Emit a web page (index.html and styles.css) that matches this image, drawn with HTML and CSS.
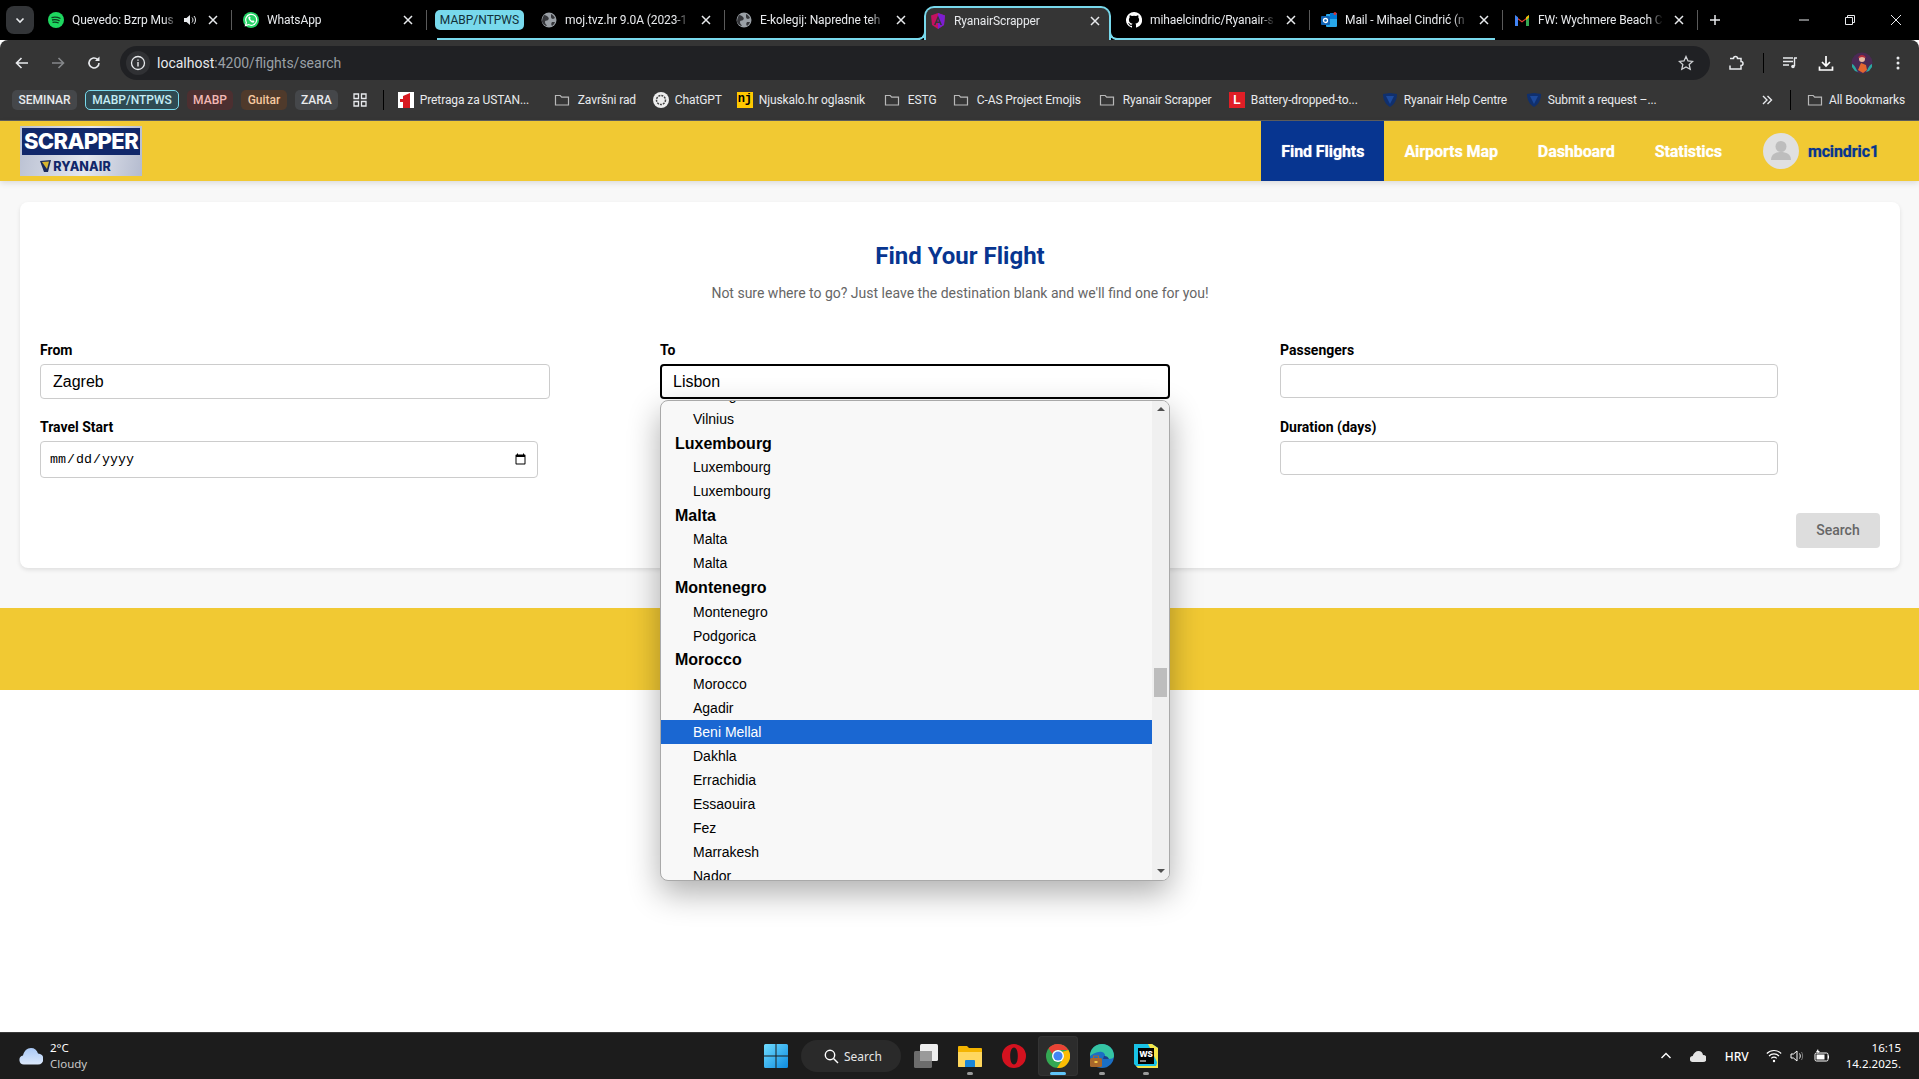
FILE: index.html
```html
<!DOCTYPE html>
<html>
<head>
  <title>RyanairScrapper</title>
  <link rel="stylesheet" href="styles.css">
</head>
<body>
<svg class="sprite" width="0" height="0">
  <symbol id="close" viewBox="0 0 12 12"><path d="M2 2l8 8M10 2l-8 8" stroke="#e8eaed" stroke-width="1.5" fill="none"/></symbol>
  <symbol id="globe" viewBox="0 0 16 16"><circle cx="8" cy="8" r="7.5" fill="#9aa0a6"/><path d="M3 3c2 0 3 1 4 2s1 2 0 3-3 0-3 2 1 2 2 4c-2 0-4-2-5-4 0-3 1-5 2-7zM10 2c2 1 3 2 4 4l-2 1c-1 0-2-1-2-2zM11 10h3c-.5 2-2 3-3 4-1-1-1-3 0-4z" fill="#35363a"/></symbol>
  <symbol id="folder" viewBox="0 0 16 16"><path d="M1.5 3.5h4.7l1.5 1.6h6.8v7.9h-13z" fill="none" stroke="#b8b8b8" stroke-width="1.2"/></symbol>
  <symbol id="shield" viewBox="0 0 16 16"><path d="M1 2l7-1 7 1c0 5-2 10-7 13C3 12 1 7 1 2z" fill="#10306e"/><path d="M4 4l4 8 4-8z" fill="#1d4a9c"/></symbol>
</svg>

<div class="tab-strip">
  <button class="tab-search"><svg width="12" height="12" viewBox="0 0 12 12"><path d="M2.5 4.5L6 8l3.5-3.5" stroke="#e8eaed" stroke-width="1.6" fill="none"/></svg></button>

  <div class="tab">
    <svg class="fav" viewBox="0 0 16 16"><circle cx="8" cy="8" r="8" fill="#1ed760"/><path d="M3.5 5.6c3-.8 6-.6 9 .9M4 8c2.600-.6 5-.4 7.600.8M4.500 10.300c2.200-.5 4.200-.3 6.200.7" stroke="#0c3b1e" stroke-width="1.300" fill="none"/></svg>
    <span class="tab-title">Quevedo: Bzrp Mus</span>
    <svg class="tab-sound" viewBox="0 0 14 14"><path d="M1 5h2.500L7 2v10L3.500 9H1z" fill="#e8eaed"/><path d="M9 4.500c1.300 1.500 1.300 3.500 0 5M11 3c2 2.300 2 5.700 0 8" stroke="#e8eaed" fill="none"/></svg>
    <svg class="tab-close"><use href="#close"/></svg>
  </div>
  <div class="tab">
    <svg class="fav" viewBox="0 0 16 16"><circle cx="8" cy="8" r="8" fill="#25d366"/><path d="M2.500 13.500l.9-3a5.500 5.500 0 1 1 2.100 2.100z" fill="#25d366" stroke="#fff" stroke-width="1.200"/><path d="M5.700 4.800c-1 1.300.2 3.100 1.300 4.200s2.900 2.300 4.100 1.300l.3-1.300-1.600-.8-.7.700c-.9-.4-1.700-1.200-2.100-2.100l.7-.7-.8-1.600z" fill="#fff"/></svg>
    <span class="tab-title">WhatsApp</span>
    <svg class="tab-close"><use href="#close"/></svg>
  </div>

  <div class="group-chip">MABP/NTPWS</div>
  <div class="tab in-group">
    <svg class="fav"><use href="#globe"/></svg>
    <span class="tab-title">moj.tvz.hr 9.0A (2023-1</span>
    <svg class="tab-close"><use href="#close"/></svg>
  </div>
  <div class="tab in-group before-active">
    <svg class="fav"><use href="#globe"/></svg>
    <span class="tab-title">E-kolegij: Napredne teh</span>
    <svg class="tab-close"><use href="#close"/></svg>
  </div>
  <div class="tab tab-active">
    <svg class="fav" viewBox="0 0 16 16"><path d="M8 0L1 2.500l1 9.500 6 4 6-4 1-9.500z" fill="#c3115f"/><path d="M8 0l7 2.500-1 9.500-6 4z" fill="#7a1fd1"/><path d="M8 2.500L4 12h1.600l.8-2h3.200l.8 2H12zM7 8.500l1-2.600 1 2.600z" fill="#35363a"/></svg>
    <span class="tab-title">RyanairScrapper</span>
    <svg class="tab-close"><use href="#close"/></svg>
  </div>
  <div class="tab in-group">
    <svg class="fav" viewBox="0 0 16 16"><path d="M8 0a8 8 0 0 0-2.500 15.600c.4.100.5-.2.500-.4v-1.400c-2.200.5-2.700-1-2.700-1-.4-.9-.9-1.200-.9-1.200-.7-.5.100-.5.100-.5.800.1 1.200.8 1.200.8.700 1.200 1.900.9 2.300.7.100-.5.300-.9.500-1.100-1.800-.2-3.600-.9-3.600-4 0-.9.300-1.600.8-2.100-.1-.2-.4-1 .1-2.100 0 0 .7-.2 2.200.8a7.600 7.600 0 0 1 4 0c1.500-1 2.200-.8 2.200-.8.400 1.100.2 1.900.1 2.100.5.600.8 1.300.8 2.100 0 3.100-1.900 3.800-3.700 4 .3.300.6.800.6 1.500v2.200c0 .2.100.5.600.4A8 8 0 0 0 8 0z" fill="#fff"/></svg>
    <span class="tab-title">mihaelcindric/Ryanair-s</span>
    <svg class="tab-close"><use href="#close"/></svg>
  </div>
  <div class="tab in-group tab-group-end">
    <svg class="fav" viewBox="0 0 16 16"><rect x="5" y="2" width="11" height="13" rx="1" fill="#28a8ea"/><rect x="9" y="1" width="7" height="6" fill="#0078d4"/><rect y="4" width="9" height="9" rx="1" fill="#0f63b5"/><circle cx="4.500" cy="8.500" r="2" fill="none" stroke="#fff" stroke-width="1.300"/><circle cx="14" cy="1.500" r="1.500" fill="#d13438"/></svg>
    <span class="tab-title">Mail - Mihael Cindrić (n</span>
    <svg class="tab-close"><use href="#close"/></svg>
  </div>
  <div class="tab">
    <svg class="fav" viewBox="0 0 16 16"><path d="M1 14V4l7 5 7-5v10h-3V7.500L8 10.500 4 7.500V14z" fill="#ea4335"/><path d="M1 14V3l3 2.200V14z" fill="#4285f4"/><path d="M15 14V3l-3 2.200V14z" fill="#34a853"/><path d="M12 5.200L15 3v2.500L12 8z" fill="#fbbc04"/></svg>
    <span class="tab-title">FW: Wychmere Beach C</span>
    <svg class="tab-close"><use href="#close"/></svg>
  </div>
  <svg class="tab-new" viewBox="0 0 12 12"><path d="M6 1v10M1 6h10" stroke="#e8eaed" stroke-width="1.500"/></svg>

  <div class="window-controls">
    <span><svg width="12" height="12" viewBox="0 0 12 12"><path d="M1 6h10" stroke="#e8eaed"/></svg></span>
    <span><svg width="12" height="12" viewBox="0 0 12 12"><path d="M1.500 3.500h7v7h-7zM3.500 3.500v-2h7v7h-2" stroke="#e8eaed" fill="none"/></svg></span>
    <span><svg width="12" height="12" viewBox="0 0 12 12"><path d="M1 1l10 10M11 1L1 11" stroke="#e8eaed"/></svg></span>
  </div>
</div>

<div class="toolbar">
  <span class="tool-btn"><svg width="16" height="16" viewBox="0 0 16 16"><path d="M14 8H3M7.500 3L2.500 8l5 5" stroke="#e8eaed" stroke-width="1.600" fill="none"/></svg></span>
  <span class="tool-btn"><svg width="16" height="16" viewBox="0 0 16 16"><path d="M2 8h11M8.500 3l5 5-5 5" stroke="#85878a" stroke-width="1.600" fill="none"/></svg></span>
  <span class="tool-btn"><svg width="16" height="16" viewBox="0 0 16 16"><path d="M13 8a5 5 0 1 1-1.500-3.600" stroke="#e8eaed" stroke-width="1.600" fill="none"/><path d="M13.500 1.500V6H9z" fill="#e8eaed"/></svg></span>
  <div class="omnibox">
    <span class="site-info"><svg width="16" height="16" viewBox="0 0 16 16"><circle cx="8" cy="8" r="6.500" stroke="#e8eaed" stroke-width="1.300" fill="none"/><path d="M8 7v4.500M8 4.500v1.300" stroke="#e8eaed" stroke-width="1.400"/></svg></span>
    <span class="url"><b>localhost</b>:4200/flights/search</span>
    <svg class="star" width="16" height="16" viewBox="0 0 16 16"><path d="M8 1.500l2 4.400 4.700.5-3.500 3.200 1 4.700L8 11.900l-4.200 2.400 1-4.700L1.300 6.400 6 5.900z" fill="none" stroke="#d0d2d5" stroke-width="1.300"/></svg>
  </div>
  <span class="tool-btn tool-first"><svg width="18" height="18" viewBox="0 0 18 18"><path d="M3 4.500h3.500a2 2 0 0 1 4 0H14v3a2 2 0 0 1 0 4V15H3v-3.500" fill="none" stroke="#e8eaed" stroke-width="1.500"/></svg></span>
  <i class="tool-sep"></i>
  <span class="tool-btn"><svg width="18" height="18" viewBox="0 0 18 18"><path d="M2 4h10M2 7.500h10M2 11h6" stroke="#e8eaed" stroke-width="1.400"/><path d="M13 4h3M13.500 4v8" stroke="#e8eaed" stroke-width="1.400"/><circle cx="12" cy="12.500" r="1.800" fill="#e8eaed"/></svg></span>
  <span class="tool-btn"><svg width="18" height="18" viewBox="0 0 18 18"><path d="M9 2v10M5 8l4 4 4-4M2.500 12.500V16h13v-3.500" stroke="#fff" stroke-width="1.700" fill="none"/></svg></span>
  <span class="tool-btn"><svg width="22" height="22" viewBox="0 0 22 22"><circle cx="11" cy="11" r="10.500" fill="#4a2a55"/><path d="M1 12c3 1 4 5 6 8l-3-1-3-4zM21 12c-3 1-4 5-6 8l3-1 3-4z" fill="#2ba7a0"/><path d="M7 18l3-7 5 2 1 5-4 3z" fill="#e2662f"/><circle cx="11" cy="7" r="3" fill="#e9b9a0"/><path d="M7 6c1-4 7-4 8 0l-4-1z" fill="#b32a3a"/></svg></span>
  <span class="tool-btn"><svg width="16" height="16" viewBox="0 0 16 16"><circle cx="8" cy="3" r="1.500" fill="#e8eaed"/><circle cx="8" cy="8" r="1.500" fill="#e8eaed"/><circle cx="8" cy="13" r="1.500" fill="#e8eaed"/></svg></span>
</div>

<div class="bookmarks">
  <span class="bm-chip chip-grey chip-seminar">SEMINAR</span>
  <span class="bm-chip chip-cyan">MABP/NTPWS</span>
  <span class="bm-chip chip-red">MABP</span>
  <span class="bm-chip chip-orange">Guitar</span>
  <span class="bm-chip chip-grey">ZARA</span>
  <svg class="bm-apps" width="16" height="16" viewBox="0 0 16 16"><path d="M2 2h4.500v4.500H2zM9.500 2H14v4.500H9.500zM2 9.500h4.500V14H2zM9.500 9.500H14V14H9.500z" fill="none" stroke="#e8eaed" stroke-width="1.300"/></svg>
  <i class="bm-sep"></i>
  <a class="bm w-156"><svg class="fav" viewBox="0 0 16 16"><rect width="16" height="16" fill="#fff"/><path d="M5 4l7-3v15H5z" fill="#d71920"/><path d="M2 7h5v3H2z" fill="#d71920"/></svg>Pretraga za USTAN...</a>
  <a class="bm bm-folder w-99"><svg class="fav"><use href="#folder"/></svg>Završni rad</a>
  <a class="bm w-84"><svg class="fav" viewBox="0 0 16 16"><circle cx="8" cy="8" r="8" fill="#eee"/><circle cx="8" cy="8" r="4.500" fill="none" stroke="#444" stroke-width="1.500" stroke-dasharray="2 1"/></svg>ChatGPT</a>
  <a class="bm w-147"><span class="fav fav-nj">nj</span>Njuskalo.hr oglasnik</a>
  <a class="bm bm-folder w-69"><svg class="fav"><use href="#folder"/></svg>ESTG</a>
  <a class="bm bm-folder w-146"><svg class="fav"><use href="#folder"/></svg>C-AS Project Emojis</a>
  <a class="bm bm-folder w-130"><svg class="fav"><use href="#folder"/></svg>Ryanair Scrapper</a>
  <a class="bm w-153"><span class="fav fav-l">L</span>Battery-dropped-to...</a>
  <a class="bm w-144"><svg class="fav"><use href="#shield"/></svg>Ryanair Help Centre</a>
  <a class="bm"><svg class="fav"><use href="#shield"/></svg>Submit a request –...</a>
  <div class="bm-right">
    <svg width="12" height="12" viewBox="0 0 12 12"><path d="M2 2l4 4-4 4M6.500 2l4 4-4 4" stroke="#e8eaed" stroke-width="1.400" fill="none"/></svg>
    <i class="bm-sep"></i>
    <a class="bm"><svg class="fav"><use href="#folder"/></svg>All Bookmarks</a>
  </div>
</div>

<header class="app-header">
  <div class="logo">
    <div class="logo-band">SCRAPPER</div>
    <div class="logo-brand"><svg width="11" height="12" viewBox="0 0 11 12"><path d="M0 1l11-1-3 12H4z" fill="#1a2a5a"/><path d="M2 2l7-.5L7 9z" fill="#d8b62f"/></svg>RYANAIR</div>
  </div>
  <nav class="nav-links">
    <a class="active">Find Flights</a>
    <a>Airports Map</a>
    <a>Dashboard</a>
    <a>Statistics</a>
  </nav>
  <div class="user">
    <span class="avatar"><svg width="36" height="36" viewBox="0 0 36 36"><circle cx="18" cy="13.500" r="5.500" fill="#bdbdbd"/><path d="M8 27c0-6 5-8 10-8s10 2 10 8z" fill="#bdbdbd"/></svg></span>
    <span class="username">mcindric1</span>
  </div>
</header>

<main class="search-section">
  <section class="card">
    <h1>Find Your Flight</h1>
    <p class="subtitle">Not sure where to go? Just leave the destination blank and we'll find one for you!</p>
    <form class="form-grid">
      <div class="field">
        <label>From</label>
        <input class="input input-wide" type="text" value="Zagreb">
      </div>
      <div class="field">
        <label>To</label>
        <div class="combo">
          <input class="input input-wide input-focus" type="text" value="Lisbon">
          <div class="popup">
            <div class="popup-list">
              <div class="opt">Palanga</div>
              <div class="opt">Vilnius</div>
              <div class="optgroup">Luxembourg</div>
              <div class="opt">Luxembourg</div>
              <div class="opt">Luxembourg</div>
              <div class="optgroup">Malta</div>
              <div class="opt">Malta</div>
              <div class="opt">Malta</div>
              <div class="optgroup">Montenegro</div>
              <div class="opt">Montenegro</div>
              <div class="opt">Podgorica</div>
              <div class="optgroup">Morocco</div>
              <div class="opt">Morocco</div>
              <div class="opt">Agadir</div>
              <div class="opt selected">Beni Mellal</div>
              <div class="opt">Dakhla</div>
              <div class="opt">Errachidia</div>
              <div class="opt">Essaouira</div>
              <div class="opt">Fez</div>
              <div class="opt">Marrakesh</div>
              <div class="opt">Nador</div>
            </div>
            <div class="popup-scroll">
              <i class="arrow-up"></i>
              <i class="thumb"></i>
              <i class="arrow-down"></i>
            </div>
          </div>
        </div>
      </div>
      <div class="field">
        <label>Passengers</label>
        <input class="input input-narrow" type="text">
      </div>
      <div class="field">
        <label>Travel Start</label>
        <input class="input input-narrow input-date" type="date">
      </div>
      <div class="field">
        <label class="label-covered" aria-label="Travel End"></label>
        <input class="input input-narrow input-date" type="date">
      </div>
      <div class="field">
        <label>Duration (days)</label>
        <input class="input input-narrow" type="text">
      </div>
    </form>
    <div class="form-actions">
      <button class="search-btn" type="button">Search</button>
    </div>
  </section>
</main>

<footer class="app-footer"></footer>
<div class="page-fill"></div>

<div class="taskbar">
  <div class="weather">
    <svg width="24" height="18" viewBox="0 0 24 18"><defs><linearGradient id="cl" x1="0" y1="0" x2="0" y2="1"><stop offset="0" stop-color="#a9c8f5"/><stop offset="1" stop-color="#dbe8fb"/></linearGradient></defs><path d="M5 17.500a4.500 4.500 0 0 1-1-8.900C5 4 8 1 12 1c3.500 0 6 2 7 5.500a5.500 5.500 0 0 1 0 11z" fill="url(#cl)"/></svg>
    <div class="weather-text"><span>2°C</span><span class="weather-sub">Cloudy</span></div>
  </div>
  <div class="task-center">
    <span class="task-btn task-start"><svg width="24" height="24" viewBox="0 0 24 24"><defs><linearGradient id="win" x1="0" y1="0" x2="1" y2="1"><stop offset="0" stop-color="#6fdcff"/><stop offset="1" stop-color="#0d8be0"/></linearGradient></defs><path d="M0 1.500A1.500 1.500 0 0 1 1.500 0h10v11.500H0zM12.500 0h10A1.500 1.500 0 0 1 24 1.500v10H12.500zM0 12.500h11.500V24h-10A1.500 1.500 0 0 1 0 22.500zM12.500 12.500H24v10a1.500 1.500 0 0 1-1.500 1.500h-10z" fill="url(#win)"/></svg></span>
    <div class="task-search"><svg width="15" height="15" viewBox="0 0 15 15"><circle cx="6" cy="6" r="4.700" fill="none" stroke="#fff" stroke-width="1.400"/><path d="M9.500 9.500L14 14" stroke="#fff" stroke-width="1.400"/></svg>Search</div>
    <span class="task-btn"><svg width="24" height="24" viewBox="0 0 24 24"><rect x="0" y="7" width="18" height="17" rx="1.500" fill="#6c6c6c"/><rect x="6" y="0" width="18" height="17" rx="1.500" fill="#eee"/><path d="M6 7h12v10H6z" fill="#9a9a9a"/></svg></span>
    <span class="task-btn running"><svg width="24" height="24" viewBox="0 0 24 24"><path d="M0 3a1 1 0 0 1 1-1h8l2 2h12a1 1 0 0 1 1 1v17a1 1 0 0 1-1 1H1a1 1 0 0 1-1-1z" fill="#f4b400"/><path d="M0 8h24v14a1 1 0 0 1-1 1H1a1 1 0 0 1-1-1z" fill="#ffd75e"/><path d="M7 17a1 1 0 0 1 1-1h8a1 1 0 0 1 1 1v6H7z" fill="#1b86d8"/></svg></span>
    <span class="task-btn"><svg width="24" height="24" viewBox="0 0 24 24"><path d="M12 0a12 12 0 1 0 0 24 12 12 0 0 0 0-24zm0 3.500c2.500 0 3.800 3.800 3.800 8.500s-1.300 8.500-3.800 8.500S8.200 16.700 8.200 12 9.500 3.500 12 3.500z" fill="#d3121f" fill-rule="evenodd"/></svg></span>
    <span class="task-btn task-hover"><svg width="24" height="24" viewBox="0 0 24 24"><circle cx="12" cy="12" r="12" fill="#34a853"/><path d="M12 0a12 12 0 0 1 10.400 6H12a6 6 0 0 0-5.700 4.100L2.500 4.300A12 12 0 0 1 12 0z" fill="#ea4335"/><path d="M22.400 6A12 12 0 0 1 11 24l5.200-8A6 6 0 0 0 16 8z" fill="#fbbc04"/><circle cx="12" cy="12" r="6" fill="#fff"/><circle cx="12" cy="12" r="4.600" fill="#4285f4"/></svg></span>
    <span class="task-btn running"><svg width="24" height="24" viewBox="0 0 24 24"><circle cx="12" cy="12" r="12" fill="#1b6fc4"/><path d="M0 12C0 5 5 0 12 0s12 5 12 12c0 2-2 3-5 3H13c3-1 3-6-1-7-5-1-9 2-12 4z" fill="#35c4a2"/><path d="M14 12a5 5 0 0 1 5 3h-6z" fill="#1b3f8c"/><rect x="0" y="14" width="12" height="9" rx="1.500" fill="#a9672b"/><rect x="3.500" y="12" width="5" height="2.500" fill="none" stroke="#a9672b"/><rect x="4.500" y="17" width="3" height="2" fill="#f4c542"/></svg></span>
    <span class="task-btn running"><svg width="24" height="24" viewBox="0 0 24 24"><path d="M0 0h18l6 4v20H4L0 20z" fill="#19c2e6"/><path d="M14 0h4l6 4v16z" fill="#f4e44a"/><path d="M2 22h20l2-6v8H4z" fill="#f4e44a"/><rect x="4" y="4" width="16" height="16" fill="#000"/><text class="ws-text" x="12" y="12.500" text-anchor="middle">WS</text><path d="M6 17h6" stroke="#fff"/></svg></span>
  </div>
  <div class="tray">
    <svg class="tray-chev" width="12" height="12" viewBox="0 0 12 12"><path d="M1.500 8L6 3.500 10.500 8" stroke="#fff" stroke-width="1.400" fill="none"/></svg>
    <svg class="tray-cloud" width="16" height="11" viewBox="0 0 16 11"><path d="M3 11a3 3 0 0 1-.3-6C3.500 2 6 0 8.500 0c2.500 0 4 1.500 4.500 4a3.500 3.500 0 0 1 0 7z" fill="#e4e4e4"/></svg>
    <span class="tray-lang">HRV</span>
    <svg class="tray-wifi" width="16" height="14" viewBox="0 0 16 14"><path d="M.8 4.500a10.200 10.200 0 0 1 14.400 0M3 7a7 7 0 0 1 10 0M5.300 9.300a3.800 3.800 0 0 1 5.400 0" stroke="#fff" fill="none" stroke-width="1.100"/><circle cx="8" cy="12" r="1.200" fill="#fff"/></svg>
    <svg class="tray-sound" width="16" height="14" viewBox="0 0 16 14"><path d="M1 5h2.500L7 2v10L3.500 9H1z" fill="none" stroke="#fff"/><path d="M9.500 4.500c1 1.500 1 3.500 0 5" stroke="#fff" fill="none"/><path d="M11.500 3c1.500 2.300 1.500 5.700 0 8" stroke="#777" fill="none"/></svg>
    <svg class="tray-batt" width="16" height="14" viewBox="0 0 16 14"><rect x="1" y="4" width="13" height="8" rx="1.500" fill="none" stroke="#fff"/><rect x="2.500" y="5.500" width="8" height="5" fill="#fff"/><path d="M14.500 6.500v3" stroke="#fff"/><path d="M4 0L2 3h2L3 5l3-3H4.500z" fill="#fff"/></svg>
    <div class="clock"><span>16:15</span><span>14.2.2025.</span></div>
  </div>
</div>
</body>
</html>
```

FILE: styles.css
```css
* {
  box-sizing: border-box;
}

html, body {
  margin: 0;
  height: 100%;
}

body {
  display: flex;
  flex-direction: column;
  min-height: 1079px;
  background-color: #ffffff;
  font-family: Roboto, "Liberation Sans", sans-serif;
  overflow: hidden;
}

.sprite {
  position: absolute;
}

/* browser tabs */
.tab-strip {
  display: flex;
  align-items: stretch;
  height: 40px;
  background-color: #000000;
  color: #e8eaed;
  font-size: 12px;
  flex: none;
}

.tab-search {
  width: 28px;
  height: 28px;
  margin: 6px 3px 0 6px;
  padding: 0;
  border: none;
  border-radius: 8px;
  background-color: #333538;
  display: flex;
  align-items: center;
  justify-content: center;
}

.tab {
  position: relative;
  display: flex;
  align-items: center;
  width: 195px;
  padding-left: 11px;
}

.tab:not(.tab-active):not(.before-active)::after {
  content: "";
  position: absolute;
  right: 0;
  top: 10px;
  height: 20px;
  width: 1px;
  background-color: #5a5a5a;
}

.fav {
  width: 16px;
  height: 16px;
  flex: none;
}

.tab-title {
  flex: 1;
  min-width: 0;
  margin-left: 8px;
  letter-spacing: -0.1px;
  white-space: nowrap;
  overflow: hidden;
  -webkit-mask-image: linear-gradient(to right, #000 88%, transparent);
  mask-image: linear-gradient(to right, #000 88%, transparent);
}

.tab-sound {
  width: 14px;
  height: 14px;
  margin-left: 6px;
  flex: none;
}

.tab-close {
  width: 12px;
  height: 12px;
  margin: 0 13px 0 10px;
  flex: none;
}

.group-chip {
  align-self: flex-start;
  margin: 10px 6px 0 8px;
  width: 89px;
  height: 20px;
  line-height: 20px;
  text-align: center;
  border-radius: 5px;
  background-color: #78d9ec;
  color: #123038;
  font-size: 12px;
  position: relative;
}

.group-chip::after {
  content: "";
  position: absolute;
  left: 2px;
  right: -6px;
  top: 28px;
  height: 2px;
  background-color: #78d9ec;
}

.in-group {
  box-shadow: inset 0 -2px 0 #78d9ec;
}

.tab-group-end {
  width: 193px;
  box-shadow: none;
  background: linear-gradient(#78d9ec, #78d9ec) left bottom / 185px 2px no-repeat;
}

.tab-active {
  width: 187px;
  margin: 6px 4px 0;
  padding: 0 0 6px 4px;
  border: 2px solid #78d9ec;
  border-bottom: none;
  border-radius: 10px 10px 0 0;
  background-color: #353535;
}

.tab-active .tab-close {
  margin-right: 8px;
}

.tab-active::before,
.tab-active::after {
  content: "";
  position: absolute;
  bottom: 0;
  width: 9px;
  height: 9px;
  background-color: #000000;
  border-bottom: 2px solid #78d9ec;
}

.tab-active::before {
  left: -11px;
  border-right: 2px solid #78d9ec;
  border-bottom-right-radius: 8px;
}

.tab-active::after {
  right: -11px;
  border-left: 2px solid #78d9ec;
  border-bottom-left-radius: 8px;
}

.tab-new {
  width: 12px;
  height: 12px;
  align-self: center;
  margin-left: 11px;
}

.window-controls {
  display: flex;
  margin-left: auto;
}

.window-controls span {
  width: 46px;
  display: flex;
  align-items: center;
  justify-content: center;
}

/* address bar */
.toolbar {
  display: flex;
  align-items: center;
  height: 40px;
  padding: 6px 3px 0 4px;
  background-color: #353535;
  border-radius: 8px 8px 0 0;
  flex: none;
}

.tool-btn {
  width: 36px;
  height: 34px;
  display: flex;
  align-items: center;
  justify-content: center;
  flex: none;
}

.tool-first {
  margin-left: 8px;
}

.tool-sep {
  width: 1px;
  height: 20px;
  margin: 0 8px 0 9px;
  background-color: #000000;
  flex: none;
}

.omnibox {
  flex: 1;
  height: 34px;
  margin-left: 8px;
  display: flex;
  align-items: center;
  padding: 0 16px 0 6px;
  border-radius: 17px;
  background-color: #202124;
  font-size: 14px;
  color: #9aa0a6;
}

.site-info {
  width: 24px;
  height: 24px;
  display: flex;
  align-items: center;
  justify-content: center;
  border-radius: 50%;
  background-color: #303134;
}

.url {
  margin-left: 7px;
}

.url b {
  font-weight: 400;
  color: #e8eaed;
}

.star {
  margin-left: auto;
}

/* bookmarks */
.bookmarks {
  display: flex;
  align-items: center;
  height: 41px;
  padding: 0 14px 1px 12px;
  background-color: #363636;
  border-bottom: 1px solid #5f5f5f;
  color: #e8eaed;
  font-size: 12px;
  flex: none;
}

.bm-chip {
  height: 20px;
  line-height: 20px;
  margin-right: 8px;
  padding: 0 6px;
  border-radius: 5px;
  font-weight: 500;
  text-align: center;
  flex: none;
}

.chip-grey {
  background-color: #45474a;
  color: #e8eaed;
}

.chip-seminar {
  width: 65px;
  padding: 0;
}

.chip-cyan {
  width: 94px;
  padding: 0;
  line-height: 18px;
  background-color: #2f4a52;
  border: 1px solid #78d9ec;
  color: #c5edf5;
}

.chip-red {
  width: 46px;
  padding: 0;
  background-color: #4c2f30;
  color: #f2b8b5;
}

.chip-orange {
  width: 46px;
  padding: 0;
  background-color: #4f3a2b;
  color: #f6c9a0;
}

.bm-apps {
  margin-left: 6px;
  flex: none;
}

.bm-sep {
  width: 1px;
  height: 20px;
  margin: 0 14px 0 15px;
  background-color: #000000;
  flex: none;
}

.bm {
  display: flex;
  align-items: center;
  gap: 6px;
  letter-spacing: -0.1px;
  white-space: nowrap;
  flex: none;
}

.bm-folder {
  gap: 8px;
}

.w-69 { width: 69px; }
.w-84 { width: 84px; }
.w-99 { width: 99px; }
.w-130 { width: 130px; }
.w-144 { width: 144px; }
.w-146 { width: 146px; }
.w-147 { width: 147px; }
.w-153 { width: 153px; }
.w-156 { width: 156px; }

.fav-nj {
  display: block;
  background-color: #ffc800;
  color: #000000;
  font: 700 12px/15px "Liberation Mono", monospace;
  text-align: center;
}

.fav-l {
  display: block;
  background-color: #e01e26;
  color: #ffffff;
  font: 700 12px/16px "Liberation Sans", sans-serif;
  text-align: center;
}

.bm-right {
  display: flex;
  align-items: center;
  margin-left: auto;
}

.bm-right .bm-sep {
  margin: 0 16px 0 17px;
}

/* app header */
.app-header {
  display: flex;
  align-items: center;
  height: 60px;
  padding-left: 20px;
  background-color: #f1c933;
  box-shadow: 0 2px 6px rgba(0, 0, 0, 0.12);
  position: relative;
  flex: none;
}

.logo {
  width: 122px;
  height: 50px;
  padding: 2px;
  background: linear-gradient(100deg, #b9c0d2, #e4e7ee 55%, #b4bbcf);
  font-family: Inter, sans-serif;
  font-weight: 800;
  text-align: center;
}

.logo-band {
  height: 27px;
  line-height: 27px;
  background-color: #11286a;
  color: #ffffff;
  font-size: 22px;
  letter-spacing: -0.6px;
}

.logo-brand {
  display: flex;
  align-items: center;
  justify-content: center;
  gap: 2px;
  height: 19px;
  padding: 3px 11px 0 0;
  font-size: 12.5px;
  letter-spacing: 0.1px;
  color: #11286a;
}

.nav-links {
  display: flex;
  align-self: stretch;
  margin-left: auto;
}

.nav-links a {
  display: flex;
  align-items: center;
  padding: 0 20px;
  color: #ffffff;
  font-size: 16px;
  font-weight: 700;
  letter-spacing: -0.07px;
  text-shadow: 0 0 1px rgba(255, 255, 255, 0.7);
}

.nav-links a.active {
  background-color: #073590;
}

.user {
  display: flex;
  align-items: center;
  gap: 9px;
  margin: 0 40px 0 21px;
}

.avatar {
  width: 36px;
  height: 36px;
  border-radius: 50%;
  background-color: #e0e0e0;
}

.username {
  color: #073590;
  font-size: 16px;
  font-weight: 700;
  letter-spacing: -0.1px;
  text-shadow: 0 0 1px rgba(7, 53, 144, 0.6);
}

/* search form */
.search-section {
  padding: 21px 19px 40px 20px;
  background-color: #f8f8f8;
  flex: none;
}

.card {
  height: 366px;
  padding: 40px 20px 20px;
  border-radius: 8px;
  background-color: #ffffff;
  box-shadow: 0 2px 4px rgba(0, 0, 0, 0.1);
}

.card h1 {
  margin: 0 0 15px;
  color: #073590;
  font-size: 24px;
  line-height: 28px;
  font-weight: 700;
  text-align: center;
}

.subtitle {
  margin: 0 0 41px;
  color: #666666;
  font-size: 14px;
  line-height: 16px;
  text-align: center;
}

.form-grid {
  display: grid;
  grid-template-columns: repeat(3, 600px);
  column-gap: 20px;
  row-gap: 20px;
}

.field label {
  display: block;
  margin-bottom: 6px;
  color: #000000;
  font-size: 14px;
  line-height: 16px;
  font-weight: 700;
}

.field .label-covered {
  height: 16px;
}

.input {
  display: block;
  height: 35px;
  padding: 0 12px;
  border: 1px solid #cccccc;
  border-radius: 4px;
  background-color: #ffffff;
  color: #000000;
  font-family: "Liberation Sans", sans-serif;
  font-size: 16px;
  outline: none;
}

.input-wide {
  width: 510px;
}

.input-narrow {
  width: 498px;
  height: 34px;
}

.input-date {
  height: 37px;
  padding: 0 8px;
  font-family: "Liberation Mono", monospace;
  font-size: 13.33px;
}

.input-focus {
  border: 2px solid #000000;
  padding: 0 11px;
}

.combo {
  position: relative;
}

.popup {
  position: absolute;
  z-index: 5;
  top: 36px;
  left: 0;
  width: 510px;
  height: 481px;
  display: flex;
  overflow: hidden;
  border: 1px solid #a9a9a9;
  border-radius: 8px;
  background-color: #f8f8f8;
  box-shadow: 0 12px 32px rgba(0, 0, 0, 0.32);
  font-family: "Liberation Sans", sans-serif;
  color: #000000;
}

.popup-list {
  flex: 1;
  margin-top: -17px;
}

.opt {
  height: 24px;
  padding-left: 32px;
  font-size: 14px;
  line-height: 23px;
}

/* lower rows of the native list sit a pixel lower */
.opt:nth-child(n+10) {
  line-height: 24px;
}

.opt.selected {
  background-color: #1a67d2;
  color: #ffffff;
}

.optgroup {
  height: 24px;
  padding-left: 14px;
  font-size: 16px;
  font-weight: 700;
  line-height: 24px;
}

.popup-scroll {
  width: 17px;
  flex: none;
  display: flex;
  flex-direction: column;
  align-items: center;
  background-color: #f0f0f0;
}

.arrow-up,
.arrow-down {
  width: 0;
  height: 0;
  border-left: 4px solid transparent;
  border-right: 4px solid transparent;
}

.arrow-up {
  margin-top: 6px;
  border-bottom: 4px solid #505050;
}

.arrow-down {
  margin-top: 172px;
  border-top: 4px solid #505050;
}

.thumb {
  width: 13px;
  height: 29px;
  margin-top: 257px;
  background-color: #bdbdbd;
}

.form-actions {
  display: flex;
  justify-content: flex-end;
  margin-top: 35px;
}

.search-btn {
  width: 84px;
  height: 35px;
  padding: 0 0 2px;
  border: none;
  border-radius: 4px;
  background-color: #dddddd;
  color: #666666;
  font-family: Roboto, sans-serif;
  font-size: 14px;
  font-weight: 500;
}

.app-footer {
  height: 82px;
  background-color: #f1c933;
  flex: none;
}

.page-fill {
  flex: 1;
  background-color: #ffffff;
}

/* windows taskbar */
.taskbar {
  display: flex;
  align-items: center;
  height: 47px;
  border-top: 1px solid #3a3a3a;
  background-color: #1c1c1c;
  color: #ffffff;
  font-family: "Noto Sans", sans-serif;
  font-size: 11.5px;
  flex: none;
}

.weather {
  width: 756px;
  padding-left: 19px;
  display: flex;
  align-items: center;
  gap: 7px;
  flex: none;
}

.weather-text {
  display: flex;
  flex-direction: column;
  line-height: 16px;
}

.weather-sub {
  color: #c8c8c8;
}

.task-center {
  display: flex;
  align-items: center;
  gap: 4px;
}

.task-btn {
  position: relative;
  width: 40px;
  height: 40px;
  display: flex;
  align-items: center;
  justify-content: center;
  border-radius: 4px;
  flex: none;
}

.task-start {
  margin-right: 1px;
}

.running::after,
.task-hover::after {
  content: "";
  position: absolute;
  bottom: 1px;
  left: 17px;
  width: 6px;
  height: 3px;
  border-radius: 2px;
  background-color: #9a9a9a;
}

.task-hover {
  background-color: #2c2c2c;
  box-shadow: inset 0 0 0 1px #333333;
}

.task-hover::after {
  left: 12px;
  width: 16px;
  background-color: #60c5fa;
}

.task-search {
  width: 100px;
  height: 32px;
  margin-right: 1px;
  padding-left: 23px;
  display: flex;
  align-items: center;
  gap: 5px;
  border-radius: 16px;
  background-color: #2a2a2a;
  color: #e6e6e6;
  font-size: 12px;
}

.ws-text {
  fill: #ffffff;
  font-family: Inter, sans-serif;
  font-size: 8px;
  font-weight: 800;
}

.tray {
  display: flex;
  align-items: center;
  margin-left: auto;
  padding-right: 18px;
}

.tray-chev {
  margin-right: 18px;
}

.tray-cloud {
  margin-right: 19px;
}

.tray-lang {
  width: 23px;
  margin-right: 18px;
  font-size: 12px;
  font-weight: 500;
}

.tray-wifi {
  margin-right: 8px;
}

.tray-sound {
  margin-right: 8px;
}

.tray-batt {
  margin-right: 16px;
}

.clock {
  display: flex;
  flex-direction: column;
  align-items: flex-end;
  line-height: 16px;
}
```
